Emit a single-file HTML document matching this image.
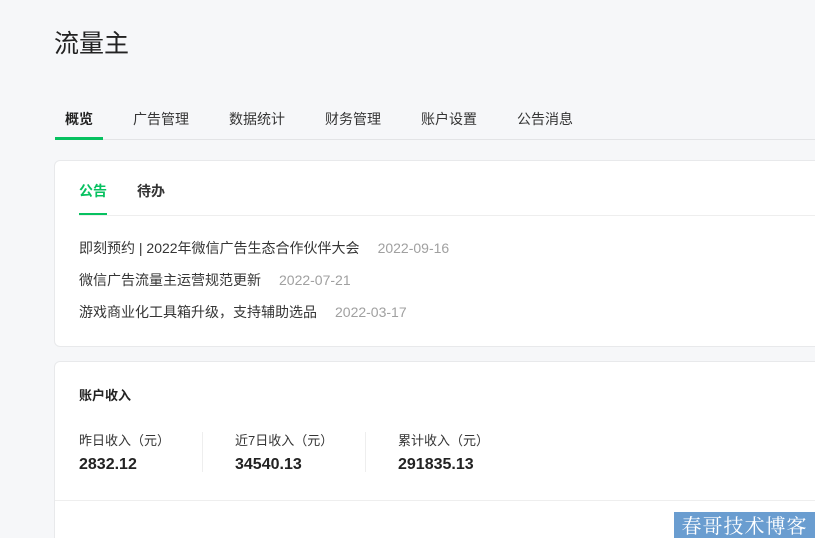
<!DOCTYPE html><html><head><meta charset="utf-8"><style>
html,body{margin:0;width:815px;height:538px;overflow:hidden}
body{background:#f6f7f9;font-family:"Liberation Sans","Noto Sans CJK SC",sans-serif;color:#353535;position:relative}
.a{position:absolute;white-space:nowrap}
.card{position:absolute;left:54px;width:780px;background:#fff;border:1px solid #e8e9eb;border-radius:6px}
.g{color:#a0a0a0;margin-left:18px}
.v{font-size:16px;font-weight:bold;color:#222}
</style></head><body>
<div class="a" style="left:54px;top:24px;font-size:25px;color:#222">流量主</div>
<div class="a" style="left:65px;top:109px;font-size:14px;font-weight:bold;color:#222">概览</div>
<div class="a" style="left:133px;top:109px;font-size:14px">广告管理</div>
<div class="a" style="left:229px;top:109px;font-size:14px">数据统计</div>
<div class="a" style="left:325px;top:109px;font-size:14px">财务管理</div>
<div class="a" style="left:421px;top:109px;font-size:14px">账户设置</div>
<div class="a" style="left:517px;top:109px;font-size:14px">公告消息</div>
<div class="a" style="left:55px;top:139px;width:760px;height:1px;background:#e3e4e6"></div>
<div class="a" style="left:55px;top:137px;width:48px;height:3px;background:#07c160"></div>
<div class="card" style="top:160px;height:185px">
<div class="a" style="left:24px;top:20px;font-size:14px;font-weight:bold;color:#07c160">公告</div>
<div class="a" style="left:82px;top:20px;font-size:14px;font-weight:bold;color:#333">待办</div>
<div class="a" style="left:24px;top:52px;width:28px;height:2px;background:#07c160"></div>
<div class="a" style="left:24px;top:54px;width:760px;height:1px;background:#eee"></div>
<div class="a" style="left:24px;top:77px;font-size:14px">即刻预约 | 2022年微信广告生态合作伙伴大会<span class="g">2022-09-16</span></div>
<div class="a" style="left:24px;top:109px;font-size:14px">微信广告流量主运营规范更新<span class="g">2022-07-21</span></div>
<div class="a" style="left:24px;top:141px;font-size:14px">游戏商业化工具箱升级，支持辅助选品<span class="g">2022-03-17</span></div>
</div>
<div class="card" style="top:361px;height:200px">
<div class="a" style="left:24px;top:23px;font-size:13px;font-weight:bold;color:#222">账户收入</div>
<div class="a" style="left:24px;top:68px;font-size:13px">昨日收入（元）</div>
<div class="a" style="left:180px;top:68px;font-size:13px">近7日收入（元）</div>
<div class="a" style="left:343px;top:68px;font-size:13px">累计收入（元）</div>
<div class="a v" style="left:24px;top:94px">2832.12</div>
<div class="a v" style="left:180px;top:94px">34540.13</div>
<div class="a v" style="left:343px;top:94px">291835.13</div>
<div class="a" style="left:147px;top:70px;width:1px;height:40px;background:#eee"></div>
<div class="a" style="left:310px;top:70px;width:1px;height:40px;background:#eee"></div>
<div class="a" style="left:0;top:138px;width:780px;height:1px;background:#eee"></div>
</div>
<div class="a" style="left:674px;top:512px;width:141px;height:26px;background:#6a9dd0;color:#fff;font-family:'Noto Serif CJK SC',serif;font-size:20px;line-height:26px;text-align:center;letter-spacing:1px">春哥技术博客</div>
</body></html>
